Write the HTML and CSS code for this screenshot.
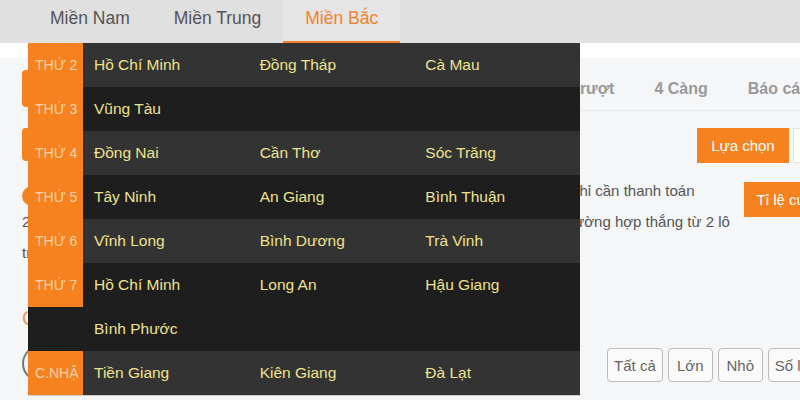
FILE: index.html
```html
<!DOCTYPE html>
<html lang="vi">
  <head>
    <meta charset="UTF-8" />
    <meta name="viewport" content="width=device-width, initial-scale=1.0" />
    <title>Lịch mở thưởng</title>
    <link rel="stylesheet" href="styles.css">
  </head>
  <body>
    <div class="region-tabs">
      <div class="region-tab">Miền Nam</div>
      <div class="region-tab">Miền Trung</div>
      <div class="region-tab active">Miền Bắc</div>
    </div>

    <div class="top-strip"></div>

    <div class="content">
      <div class="subnav">
        <div class="subnav-item active">Lô xiên</div>
        <div class="subnav-group">
          <div class="subnav-item">Đề</div>
          <div class="subnav-item">Lô trượt</div>
          <div class="subnav-item">4 Càng</div>
          <div class="subnav-item">Báo cáo</div>
        </div>
      </div>

      <div class="toolbar">
        <div class="select-box">Xiên 2</div>
        <button class="btn-orange">Lựa chọn</button>
        <div class="input-box"></div>
      </div>

      <div class="rule-row">
        <p class="rule-text">
          <span class="dot">1</span> Lô xiên 2 là hình thức người chơi chọn ghép hai cặp số bất kỳ để đặt cược, và chỉ cần thanh toán<br />
          2 lô hoặc nhiều hơn, sẽ được tính tiền thưởng theo tỉ lệ cược tương ứng cho các trường hợp thắng từ 2 lô<br />
          trở lên trong cùng một kỳ quay.
        </p>
        <button class="btn-orange btn-rate">Tỉ lệ cược</button>
      </div>

      <div class="pick-title">Chọn số</div>

      <div class="pick-row">
        <div class="ball">00</div>
        <div class="filters">
          <button class="filter">Tất cả</button>
          <button class="filter">Lớn</button>
          <button class="filter">Nhỏ</button>
          <button class="filter">Số lẻ</button>
        </div>
      </div>
    </div>

    <!-- lịch quay thưởng theo ngày -->
    <div class="schedule">
      <div class="day-row">
        <div class="day"><span>THỨ 2</span></div>
        <div class="cities">
          <span>Hồ Chí Minh</span><span>Đồng Tháp</span><span>Cà Mau</span>
        </div>
      </div>
      <div class="day-row">
        <div class="day"><span>THỨ 3</span></div>
        <div class="cities">
          <span>Vũng Tàu</span>
        </div>
      </div>
      <div class="day-row">
        <div class="day"><span>THỨ 4</span></div>
        <div class="cities">
          <span>Đồng Nai</span><span>Cần Thơ</span><span>Sóc Trăng</span>
        </div>
      </div>
      <div class="day-row">
        <div class="day"><span>THỨ 5</span></div>
        <div class="cities">
          <span>Tây Ninh</span><span>An Giang</span><span>Bình Thuận</span>
        </div>
      </div>
      <div class="day-row">
        <div class="day"><span>THỨ 6</span></div>
        <div class="cities">
          <span>Vĩnh Long</span><span>Bình Dương</span><span>Trà Vinh</span>
        </div>
      </div>
      <div class="day-row">
        <div class="day"><span>THỨ 7</span></div>
        <div class="cities">
          <span>Hồ Chí Minh</span><span>Long An</span><span>Hậu Giang</span><span>Bình Phước</span>
        </div>
      </div>
      <div class="day-row">
        <div class="day"><span>C.NHẬT</span></div>
        <div class="cities">
          <span>Tiền Giang</span><span>Kiên Giang</span><span>Đà Lạt</span>
        </div>
      </div>
    </div>
  </body>
</html>
```

FILE: styles.css
```css
html,
body {
  overflow: hidden;
}

body {
  font-family: "Liberation Sans", Arial, sans-serif;
  background: #f4f6f8;
  margin: 0;
  color: #555;
  position: relative;
  height: 400px;
}

.region-tabs {
  display: flex;
  background: #e0e0e0;
  padding-left: 28px;
  height: 43px;
}

.region-tab {
  padding: 0 22px;
  height: 41px;
  line-height: 36px;
  font-size: 17.5px;
  color: #555;
  border-bottom: 2px solid transparent;
}

.region-tab.active {
  color: #f5822a;
  background: #e5e5e5;
  border-bottom-color: #f5822a;
}

.top-strip {
  height: 15px;
  background: #fff;
}

.content {
  padding: 12px 0 0 22px;
  width: 851px;
}

.subnav {
  display: flex;
  padding-bottom: 3px;
  padding-right: 43px;
  border-bottom: 1px solid #e6e8ea;
}

.subnav-group {
  display: flex;
  margin-left: auto;
}

.subnav-item {
  padding: 0 20px;
  height: 37px;
  line-height: 37px;
  font-size: 16px;
  font-weight: 700;
  color: #999;
}

.subnav-item.active {
  background: #f5821f;
  color: #fff;
  border-radius: 4px;
}

.toolbar {
  display: flex;
  align-items: flex-start;
  margin-top: 17px;
}

.select-box {
  width: 200px;
  height: 33px;
  line-height: 33px;
  background: #f5821f;
  color: #fff;
  border-radius: 4px;
  padding-left: 12px;
  margin-right: auto;
}

.btn-orange {
  font-family: inherit;
  background: #f5821f;
  color: #fff;
  border: none;
  font-size: 15px;
  height: 35px;
  padding: 0 13px;
  width: 92px;
}

.input-box {
  width: 78px;
  height: 33px;
  margin-left: 4px;
  background: #fff;
  border: 1px solid #e2e2e2;
}

.rule-row {
  display: flex;
  align-items: flex-start;
  margin-top: 12px;
}

.rule-text {
  flex: 1;
  margin: 0;
  font-size: 15px;
  line-height: 31px;
  color: #555;
  white-space: nowrap;
}

.dot {
  display: inline-block;
  width: 20px;
  height: 20px;
  border-radius: 50%;
  background: #f5821f;
  color: #fff;
  font-size: 12px;
  line-height: 20px;
  text-align: center;
  vertical-align: -4px;
}

.btn-rate {
  width: auto;
  margin-top: 7px;
  margin-right: 36px;
  position: relative;
}

.pick-title {
  margin-top: 38px;
  font-size: 20px;
  line-height: 24px;
  color: #f5955a;
}

.pick-row {
  display: flex;
  align-items: flex-end;
  margin-top: 15px;
}

.ball {
  width: 33px;
  height: 33px;
  border: 2px solid #777;
  border-radius: 50%;
  line-height: 33px;
  text-align: center;
  font-size: 15px;
}

.filters {
  display: flex;
  gap: 5px;
  margin-left: auto;
  margin-right: 57px;
}

.filter {
  font-family: inherit;
  height: 34px;
  min-width: 45px;
  padding: 0 6px;
  font-size: 15px;
  color: #666;
  background: #fafafa;
  border: 1px solid #bbb;
  border-radius: 4px;
}

.schedule {
  position: absolute;
  top: 43px;
  left: 28px;
  width: 552px;
  border-bottom: 1px solid #ccc;
}

.day-row {
  display: flex;
  align-items: flex-start;
  background: #333;
}

.day-row:nth-child(even) {
  background: #1e1e1e;
}

.day {
  width: 55px;
  flex-shrink: 0;
  height: 44px;
  line-height: 44px;
  padding-left: 7px;
  box-sizing: border-box;
  background: #f5821f;
  color: #fbd2a6;
  font-size: 14px;
}

.day span {
  display: block;
  width: 43px;
  white-space: nowrap;
  overflow: hidden;
}

.cities {
  flex: 1;
  display: grid;
  grid-template-columns: repeat(3, 1fr);
}

.cities span {
  height: 44px;
  line-height: 44px;
  padding-left: 11px;
  font-size: 15.5px;
  color: #efe28d;
}
```
